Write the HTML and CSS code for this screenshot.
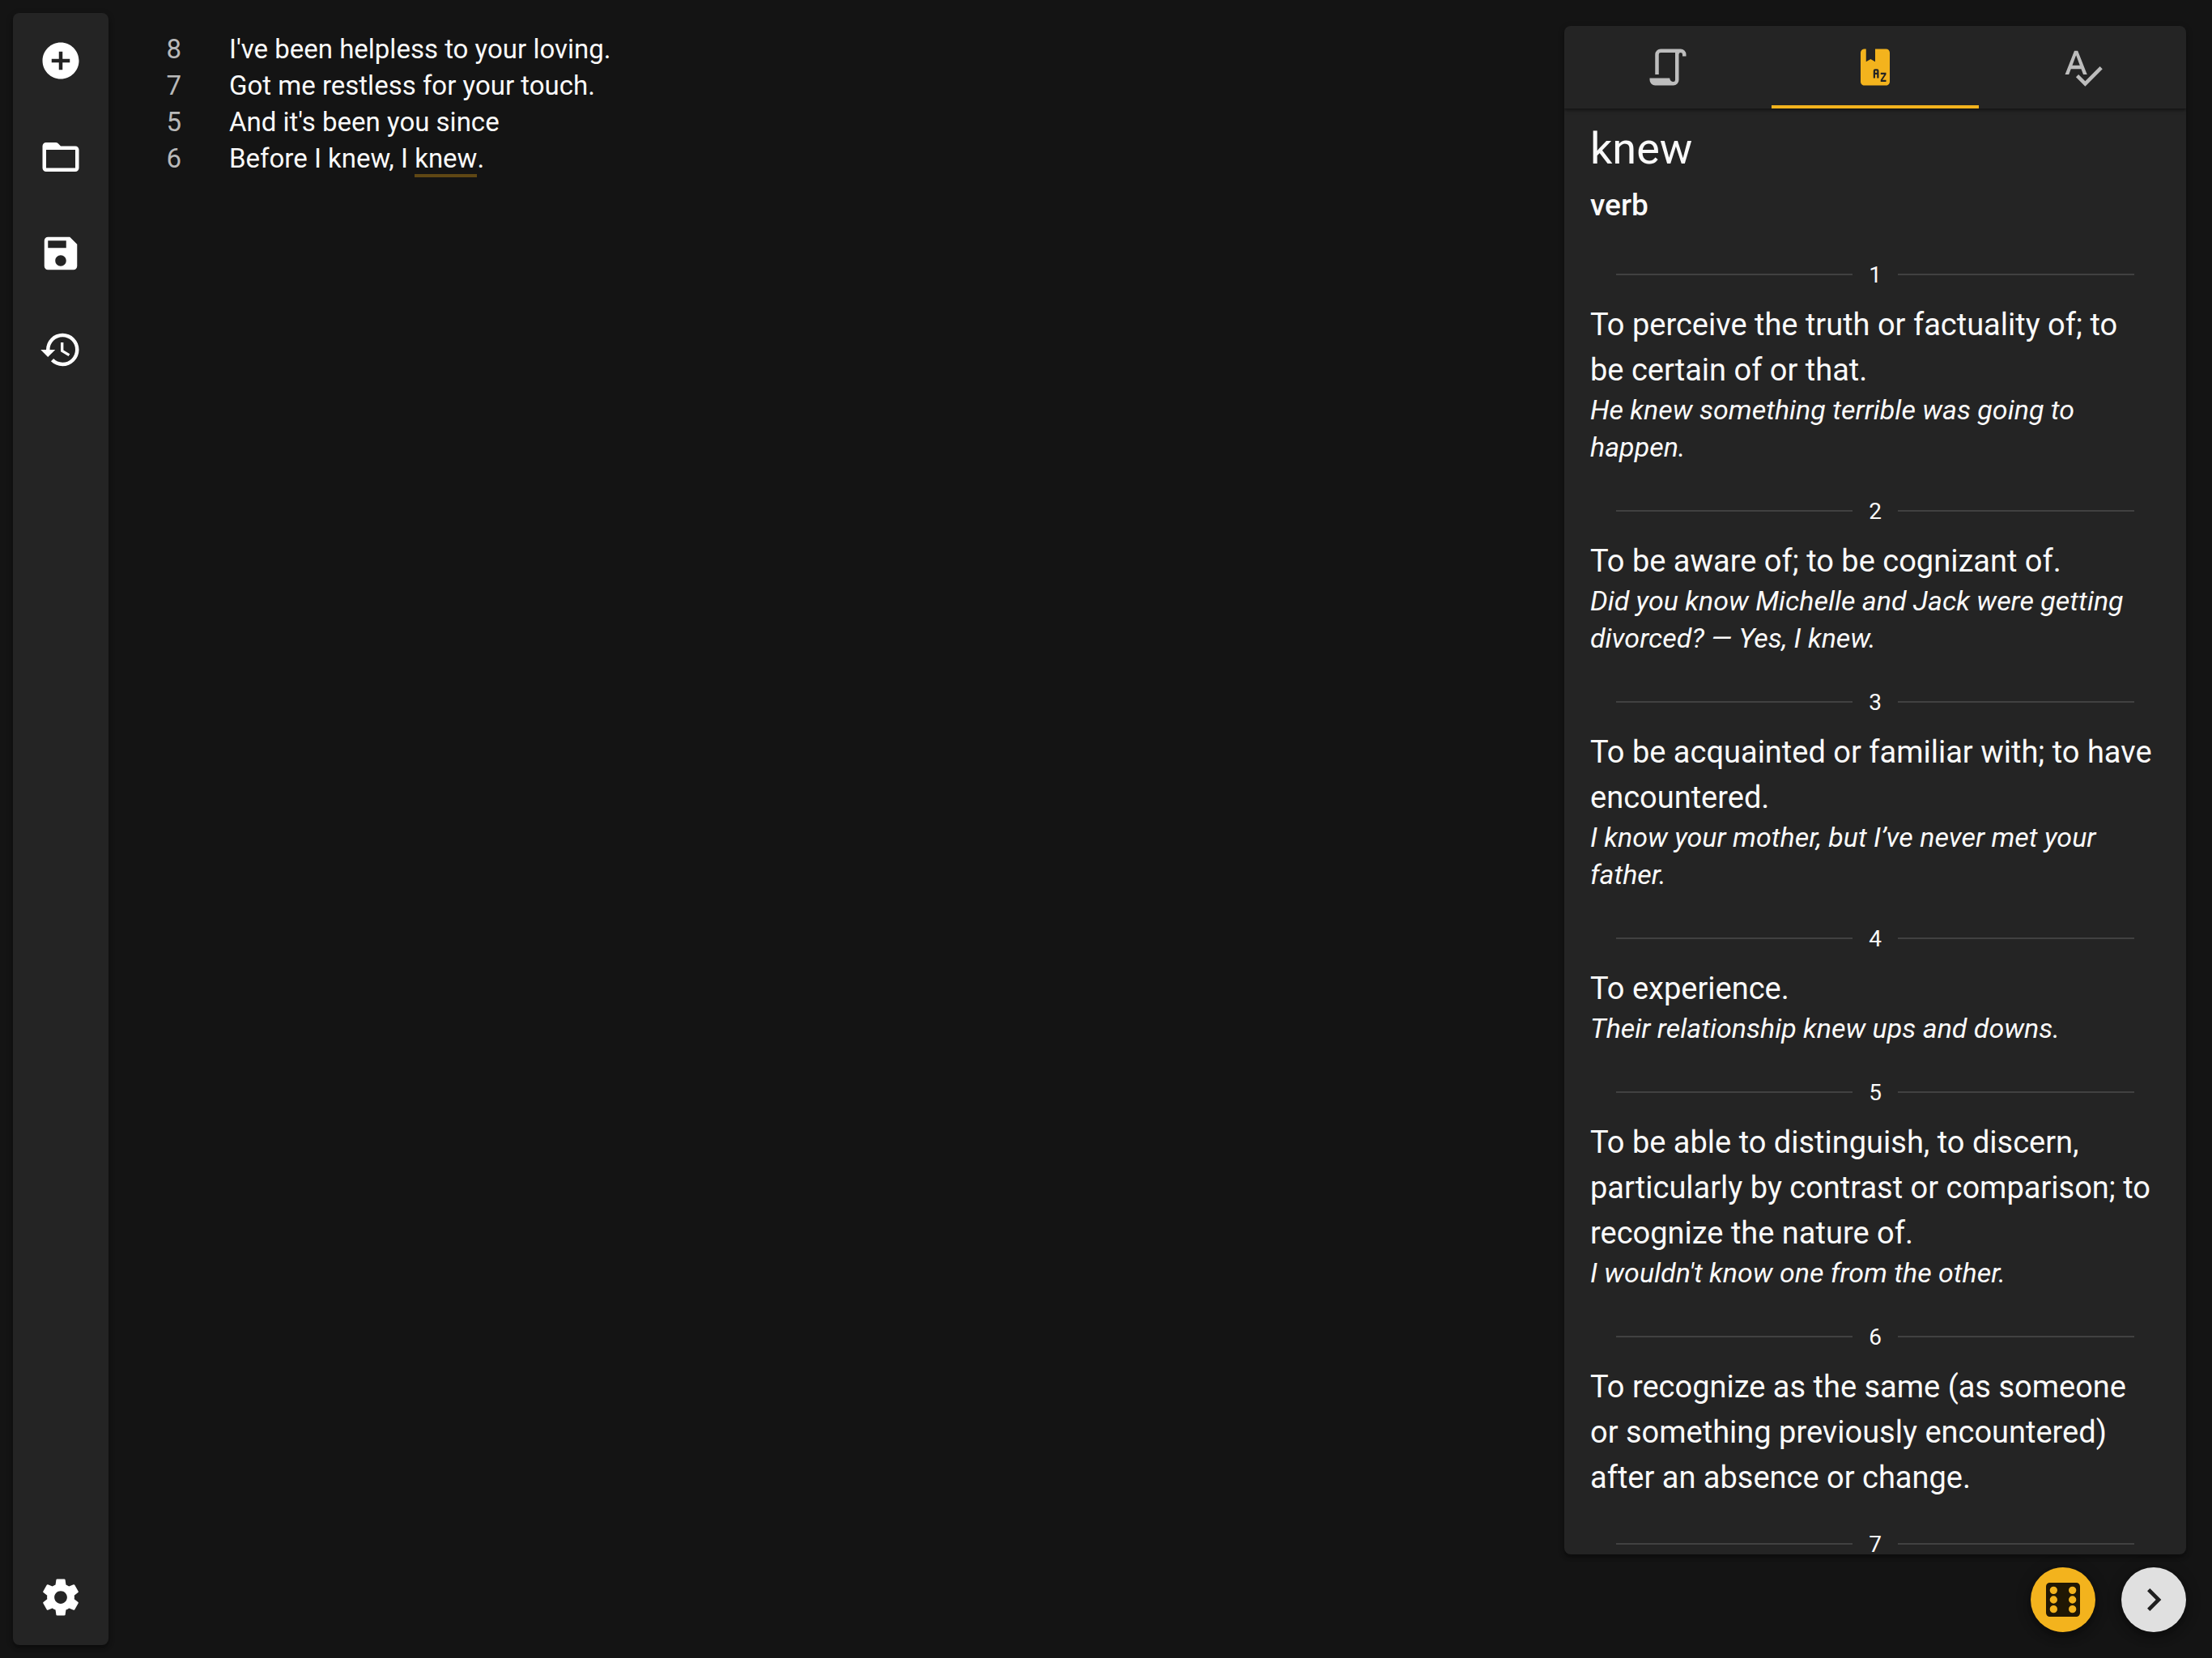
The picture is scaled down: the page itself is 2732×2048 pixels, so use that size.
FILE: index.html
```html
<!DOCTYPE html>
<html lang="en">
<head>
<meta charset="utf-8">
<title>Lyrics editor</title>
<link rel="stylesheet" href="styles.css">
</head>
<body>
<div class="app">
  <nav class="sidebar" aria-label="File">
    <button class="nav-button" type="button" aria-label="New"><svg class="icon" viewBox="0 0 24 24"><path d="M12 2C6.48 2 2 6.48 2 12s4.48 10 10 10 10-4.48 10-10S17.520 2 12 2zm5 11h-4v4h-2v-4H7v-2h4V7h2v4h4v2z"/></svg></button>
    <button class="nav-button" type="button" aria-label="Open"><svg class="icon" viewBox="0 0 24 24"><path d="M20 18H4V8H20M20 6H12L10.600 4.600A2 2 0 0 0 9.200 4H4C2.890 4 2 4.890 2 6V18C2 19.110 2.900 20 4 20H20C21.110 20 22 19.110 22 18V8C22 6.890 21.100 6 20 6Z"/></svg></button>
    <button class="nav-button" type="button" aria-label="Save"><svg class="icon" viewBox="0 0 24 24"><path d="M17 3H5c-1.110 0-2 .9-2 2v14c0 1.100.89 2 2 2h14c1.100 0 2-.9 2-2V7l-4-4zm-5 16c-1.660 0-3-1.340-3-3s1.340-3 3-3 3 1.340 3 3-1.340 3-3 3zm3-10H5V5h10v4z"/></svg></button>
    <button class="nav-button" type="button" aria-label="History"><svg class="icon" viewBox="0 0 24 24"><path d="M13.500 8H12V13L16.280 15.540L17 14.330L13.500 12.250V8M13 3A9 9 0 0 0 4 12H1L4.960 16.030L9 12H6A7 7 0 0 1 13 5A7 7 0 0 1 20 12A7 7 0 0 1 13 19C11.070 19 9.320 18.210 8.060 16.940L6.640 18.360C8.270 20 10.500 21 13 21A9 9 0 0 0 22 12A9 9 0 0 0 13 3"/></svg></button>
    <button class="nav-button nav-button--last" type="button" aria-label="Settings"><svg class="icon" viewBox="0 0 24 24"><path d="M19.430 12.980c.04-.32.07-.64.07-.98s-.03-.66-.07-.98l2.110-1.650c.19-.15.24-.42.12-.64l-2-3.460c-.12-.22-.39-.3-.61-.22l-2.490 1c-.52-.4-1.080-.73-1.690-.98l-.38-2.650C14.460 2.180 14.250 2 14 2h-4c-.25 0-.46.18-.49.42l-.38 2.650c-.61.25-1.170.59-1.690.98l-2.490-1c-.23-.09-.49 0-.61.22l-2 3.460c-.13.22-.07.49.12.64l2.110 1.650c-.04.32-.07.65-.07.98s.03.66.07.98l-2.110 1.650c-.19.15-.24.42-.12.64l2 3.460c.12.22.39.3.61.22l2.490-1c.52.4 1.080.73 1.690.98l.38 2.650c.03.24.24.42.49.42h4c.25 0 .46-.18.49-.42l.38-2.650c.61-.25 1.170-.59 1.690-.98l2.490 1c.23.09.49 0 .61-.22l2-3.460c.12-.22.07-.49-.12-.64l-2.110-1.650zM12 15.500c-1.930 0-3.500-1.570-3.500-3.500s1.570-3.500 3.500-3.500 3.500 1.570 3.500 3.500-1.570 3.500-3.500 3.500z"/></svg></button>
  </nav>

  <main class="editor">
    <ol class="lines">
      <li class="line"><span class="count">8</span><span>I've been helpless to your loving.</span></li>
      <li class="line"><span class="count">7</span><span>Got me restless for your touch.</span></li>
      <li class="line"><span class="count">5</span><span>And it's been you since</span></li>
      <li class="line"><span class="count">6</span><span>Before I knew, I <mark class="picked">knew</mark>.</span></li>
    </ol>
  </main>

  <aside class="side">
    <section class="panel">
      <div class="tabs" role="tablist">
        <button class="tab" type="button" role="tab" aria-selected="false" aria-label="Rhymes"><svg class="icon" viewBox="0 0 24 24"><path d="M15 20A1 1 0 0 0 16 19V4H8A1 1 0 0 0 7 5V16H5V5A3 3 0 0 1 8 2H19A3 3 0 0 1 22 5V6H20V5A1 1 0 0 0 19 4A1 1 0 0 0 18 5V19A3 3 0 0 1 15 22H5A3 3 0 0 1 2 19V18H13A2 2 0 0 0 15 20Z"/></svg></button>
        <button class="tab tab--active" type="button" role="tab" aria-selected="true" aria-label="Dictionary"><svg class="icon" viewBox="0 0 24 24"><path d="M5.810 2C4.830 2.090 4 3 4 4V20C4 21.050 4.950 22 6 22H18C19.050 22 20 21.050 20 20V4C20 2.890 19.100 2 18 2H12V9L9.500 7.500L7 9V2H6C5.940 2 5.870 2 5.810 2M12 13H13A1 1 0 0 1 14 14V18H13V16H12V18H11V14A1 1 0 0 1 12 13M12 14V15H13V14H12M15 15H18V16L16 19H18V20H15V19L17 16H15V15Z"/></svg></button>
        <button class="tab" type="button" role="tab" aria-selected="false" aria-label="Spelling"><svg class="icon" viewBox="0 0 24 24"><path d="M12.450 16h2.090L9.430 3H7.570L2.460 16h2.090l1.120-3h5.640l1.140 3zm-6.020-5L8.500 5.480 10.570 11H6.430zm15.160.590l-8.090 8.090L9.830 16l-1.410 1.410 5.090 5.090L23 13l-1.410-1.410z"/></svg></button>
      </div>
      <div class="entry" role="tabpanel">
        <h1 class="word">knew</h1>
        <h2 class="class">verb</h2>
        <div class="divider">1</div>
        <p class="meaning">To perceive the truth or factuality of; to be certain of or that.</p>
        <p class="example">He knew something terrible was going to happen.</p>
        <div class="divider">2</div>
        <p class="meaning">To be aware of; to be cognizant of.</p>
        <p class="example">Did you know Michelle and Jack were getting divorced? — Yes, I knew.</p>
        <div class="divider">3</div>
        <p class="meaning">To be acquainted or familiar with; to have encountered.</p>
        <p class="example">I know your mother, but I’ve never met your father.</p>
        <div class="divider">4</div>
        <p class="meaning">To experience.</p>
        <p class="example">Their relationship knew ups and downs.</p>
        <div class="divider">5</div>
        <p class="meaning">To be able to distinguish, to discern, particularly by contrast or comparison; to recognize the nature of.</p>
        <p class="example">I wouldn't know one from the other.</p>
        <div class="divider">6</div>
        <p class="meaning">To recognize as the same (as someone or something previously encountered) after an absence or change.</p>
        <div class="divider">7</div>
      </div>
    </section>
    <div class="actions">
      <button class="fab fab--primary" type="button" aria-label="Random"><svg class="icon" viewBox="0 0 24 24"><path d="M5 3H19A2 2 0 0 1 21 5V19A2 2 0 0 1 19 21H5A2 2 0 0 1 3 19V5A2 2 0 0 1 5 3M7 5A2 2 0 0 0 5 7A2 2 0 0 0 7 9A2 2 0 0 0 9 7A2 2 0 0 0 7 5M17 15A2 2 0 0 0 15 17A2 2 0 0 0 17 19A2 2 0 0 0 19 17A2 2 0 0 0 17 15M17 10A2 2 0 0 0 15 12A2 2 0 0 0 17 14A2 2 0 0 0 19 12A2 2 0 0 0 17 10M17 5A2 2 0 0 0 15 7A2 2 0 0 0 17 9A2 2 0 0 0 19 7A2 2 0 0 0 17 5M7 10A2 2 0 0 0 5 12A2 2 0 0 0 7 14A2 2 0 0 0 9 12A2 2 0 0 0 7 10M7 15A2 2 0 0 0 5 17A2 2 0 0 0 7 19A2 2 0 0 0 9 17A2 2 0 0 0 7 15Z"/></svg></button>
      <button class="fab" type="button" aria-label="Next"><svg class="icon" viewBox="0 0 24 24"><path d="M10 6L8.590 7.410 13.170 12l-4.580 4.590L10 18l6-6z"/></svg></button>
    </div>
  </aside>
</div>
</body>
</html>
```
FILE: styles.css
```css
* {
  box-sizing: border-box;
}

body {
  margin: 0;
  background: #141414;
  color: #fafafa;
  font-family: Roboto, "Liberation Sans", sans-serif;
  font-size: 33px;
  line-height: 45px;
}

button {
  padding: 0;
  border: 0;
  background: none;
  color: inherit;
  cursor: pointer;
}

h1, h2, p, ol {
  margin: 0;
  padding: 0;
}

.app {
  display: flex;
  height: 100vh;
  padding: 16px;
}

.icon {
  display: block;
  width: 54px;
  height: 54px;
  fill: currentColor;
}

.sidebar {
  display: flex;
  flex-direction: column;
  flex: none;
  gap: 1px;
  width: 118px;
  border-radius: 8px;
  background: #242424;
  color: #fff;
  box-shadow: 0 4px 4px rgba(0, 0, 0, .25), 0 2px 8px rgba(0, 0, 0, .2);
}

.nav-button {
  display: grid;
  place-items: center;
  height: 118px;
}

.nav-button--last {
  margin-top: auto;
}

.editor {
  flex: 1;
  padding: 22px 0 0 66px;
}

.lines {
  list-style: none;
}

.line {
  display: flex;
  gap: 59px;
}

.count {
  width: 24px;
  text-align: right;
  color: #b9b9b9;
}

.picked {
  display: inline-block;
  margin-bottom: -4px;
  border-bottom: 4px solid #5f4714;
  background: none;
  color: inherit;
  line-height: 38px;
}

.side {
  display: flex;
  flex-direction: column;
  flex: none;
  gap: 16px;
  width: 784px;
  padding: 16px 16px 16px 0;
}

.panel {
  display: flex;
  flex-direction: column;
  flex: 1;
  min-height: 0;
  border-radius: 8px;
  background: #242424;
  overflow: hidden;
  box-shadow: 0 4px 4px rgba(0, 0, 0, .25), 0 2px 8px rgba(0, 0, 0, .2);
}

.tabs {
  display: grid;
  grid-template-columns: repeat(3, 1fr);
  flex: none;
  height: 102px;
  box-shadow: 0 2px 4px rgba(0, 0, 0, .5);
}

.tab {
  display: grid;
  place-items: center;
  border-top: 4px solid transparent;
  border-bottom: 4px solid transparent;
  color: #bdbdbd;
}

.tab--active {
  border-bottom-color: #f3b31d;
  color: #f3b31d;
}

.entry {
  padding: 18px 40px 0 32px;
}

.word {
  font-size: 54px;
  font-weight: 400;
  line-height: 64px;
}

.class {
  padding: 8px 0 1px;
  font-size: 37px;
  font-weight: 500;
  line-height: 60px;
}

.divider {
  display: flex;
  align-items: center;
  gap: 20px;
  height: 40px;
  margin: 34px 24px 14px 32px;
  font-size: 28px;
}

.divider::before,
.divider::after {
  content: "";
  flex: 1;
  height: 2px;
  background: #414141;
}

.meaning {
  font-size: 38px;
  line-height: 56px;
}

.example {
  margin-top: -2px;
  padding-bottom: 2px;
  font-size: 34px;
  font-style: italic;
  line-height: 46px;
}

.actions {
  display: flex;
  justify-content: flex-end;
  gap: 32px;
}

.fab {
  display: grid;
  place-items: center;
  width: 80px;
  height: 80px;
  border-radius: 50%;
  background: #e0e0e0;
  color: #1f1f1f;
  box-shadow: 0 6px 10px rgba(0, 0, 0, .3), 0 2px 20px rgba(0, 0, 0, .2);
}

.fab .icon {
  width: 56px;
  height: 56px;
}

.fab--primary {
  background: #f3b31d;
  color: #201704;
}
```
